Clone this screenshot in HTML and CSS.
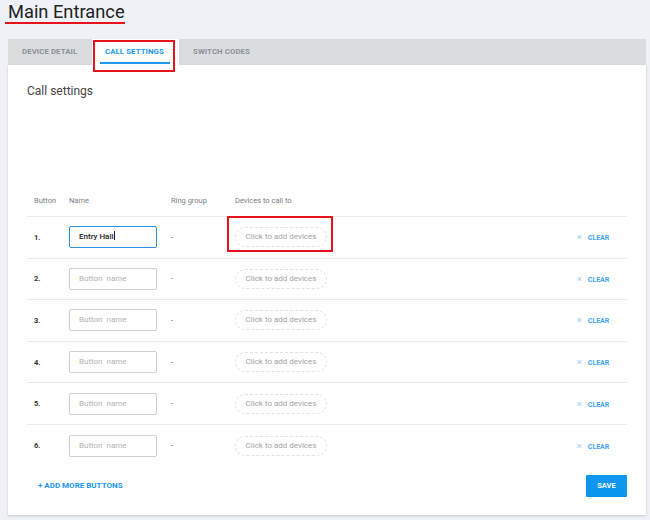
FILE: index.html
```html
<!DOCTYPE html>
<html>
<head>
<meta charset="utf-8">
<link rel="stylesheet" href="styles.css">
</head>
<body>
<div class="page">
  <h1 class="title">Main Entrance</h1>
  <div class="panel">
    <div class="tabs">
      <div class="tab">DEVICE DETAIL</div>
      <div class="tab active">CALL SETTINGS<span class="mark mark-tab"></span></div>
      <div class="tab">SWITCH CODES</div>
    </div>
    <div class="card">
      <h2 class="heading">Call settings</h2>
      <div class="table">
        <div class="row head">
          <div>Button</div><div>Name</div><div>Ring group</div><div>Devices to call to</div><div></div>
        </div>
        <div class="row">
          <div class="num">1.</div>
          <div><div class="input focus">Entry Hall<span class="caret"></span></div></div>
          <div class="dash">-</div>
          <div class="devcell"><span class="pill">Click to add devices</span><span class="mark mark-pill"></span></div>
          <div class="clear"><span class="x">×</span>CLEAR</div>
        </div>
        <div class="row">
          <div class="num">2.</div>
          <div><div class="input ph">Button &nbsp;name</div></div>
          <div class="dash">-</div>
          <div class="devcell"><span class="pill">Click to add devices</span></div>
          <div class="clear"><span class="x">×</span>CLEAR</div>
        </div>
        <div class="row">
          <div class="num">3.</div>
          <div><div class="input ph">Button &nbsp;name</div></div>
          <div class="dash">-</div>
          <div class="devcell"><span class="pill">Click to add devices</span></div>
          <div class="clear"><span class="x">×</span>CLEAR</div>
        </div>
        <div class="row">
          <div class="num">4.</div>
          <div><div class="input ph">Button &nbsp;name</div></div>
          <div class="dash">-</div>
          <div class="devcell"><span class="pill">Click to add devices</span></div>
          <div class="clear"><span class="x">×</span>CLEAR</div>
        </div>
        <div class="row">
          <div class="num">5.</div>
          <div><div class="input ph">Button &nbsp;name</div></div>
          <div class="dash">-</div>
          <div class="devcell"><span class="pill">Click to add devices</span></div>
          <div class="clear"><span class="x">×</span>CLEAR</div>
        </div>
        <div class="row last">
          <div class="num">6.</div>
          <div><div class="input ph">Button &nbsp;name</div></div>
          <div class="dash">-</div>
          <div class="devcell"><span class="pill">Click to add devices</span></div>
          <div class="clear"><span class="x">×</span>CLEAR</div>
        </div>
      </div>
      <div class="footer">
        <span class="add">+ ADD MORE BUTTONS</span>
        <span class="save">SAVE</span>
      </div>
    </div>
  </div>
</div>
</body>
</html>
```
FILE: styles.css
```css
html, body {
  margin: 0;
  padding: 0;
  background: #eef1f6;
  font-family: Roboto, "Liberation Sans", sans-serif;
}
.page {
  width: 650px;
  height: 520px;
  overflow: hidden;
}
.title {
  position: relative;
  margin: 0;
  padding: 1px 0 0 8px;
  height: 38px;
  font-size: 18.3px;
  font-weight: 400;
  color: #222;
  line-height: 22px;
}
.title::after {
  content: "";
  position: absolute;
  left: 5px;
  top: 22px;
  width: 120px;
  height: 2px;
  background: #e5141b;
}
.panel {
  margin-left: 8px;
  width: 638px;
}
.tabs {
  display: flex;
  height: 26px;
  background: #d9dde0;
}
.tab {
  position: relative;
  box-sizing: border-box;
  padding-left: 14px;
  white-space: nowrap;
  font-size: 7.8px;
  font-weight: 700;
  color: #8b9197;
  line-height: 26px;
  letter-spacing: 0.1px;
}
.tab:first-child { width: 84px; }
.tab.active {
  background: #fff;
  color: #2196f3;
  width: 87px;
  padding-left: 13px;
}
.tab.active::after {
  content: "";
  position: absolute;
  left: 8px;
  right: 9px;
  bottom: 1px;
  height: 2px;
  background: #2196f3;
}
.mark {
  position: absolute;
  border: 2.5px solid #e5141b;
  box-sizing: border-box;
}
.mark-tab {
  left: 1px;
  top: 1px;
  width: 82px;
  height: 32px;
  z-index: 2;
}
.card {
  background: #fff;
  height: 450px;
  box-shadow: 0 1px 2px rgba(0,0,0,0.18);
  padding: 0 19px 0 19px;
  box-sizing: border-box;
  display: flex;
  flex-direction: column;
}
.heading {
  margin: 19px 0 0 0;
  font-size: 12px;
  font-weight: 400;
  color: #444;
  line-height: 14px;
  height: 103px;
}
.table {
  display: flex;
  flex-direction: column;
}
.row {
  display: grid;
  grid-template-columns: 35px 102px 64px 1fr 50px;
  align-items: center;
  padding-left: 7px;
  height: 41.6px;
  border-bottom: 1px solid #ebebeb;
  box-sizing: border-box;
  font-size: 7.5px;
}
.row.head {
  height: 30px;
  color: #7b7f84;
  padding-bottom: 3px;
}
.row.last { border-bottom: none; }
.num {
  font-weight: 700;
  color: #333;
}
.input {
  width: 88px;
  height: 22px;
  box-sizing: border-box;
  border: 1px solid #cfcfcf;
  border-radius: 2px;
  padding-left: 9px;
  line-height: 20px;
  font-size: 8px;
  color: #222;
}
.input.focus {
  border: 1.5px solid #2b8fe6;
  line-height: 19px;
  font-weight: 500;
}
.input.ph { color: #b3b3b3; }
.caret {
  display: inline-block;
  width: 1px;
  height: 9px;
  background: #222;
  vertical-align: -1px;
}
.dash { color: #555; }
.devcell { position: relative; }
.pill {
  display: inline-block;
  width: 92px;
  height: 20px;
  box-sizing: border-box;
  border: 1px dashed #e2e2e2;
  border-radius: 10px;
  text-align: center;
  line-height: 18px;
  color: #a3a3a3;
  font-size: 8px;
}
.mark-pill {
  left: -8px;
  top: -11px;
  width: 106px;
  height: 36px;
}
.clear {
  color: #2196f3;
  font-weight: 700;
  font-size: 7px;
  opacity: 0.85;
}
.x {
  font-weight: 400;
  font-size: 9px;
  color: #8fbfe8;
  margin-right: 6px;
}
.footer {
  display: flex;
  justify-content: space-between;
  align-items: center;
  padding: 8px 0 0 11px;
}
.add {
  color: #2196f3;
  font-size: 8px;
  font-weight: 700;
}
.save {
  width: 41px;
  height: 22px;
  background: #0d96ee;
  color: #fff;
  font-size: 7.5px;
  font-weight: 700;
  text-align: center;
  line-height: 22px;
  border-radius: 1px;
}
```
